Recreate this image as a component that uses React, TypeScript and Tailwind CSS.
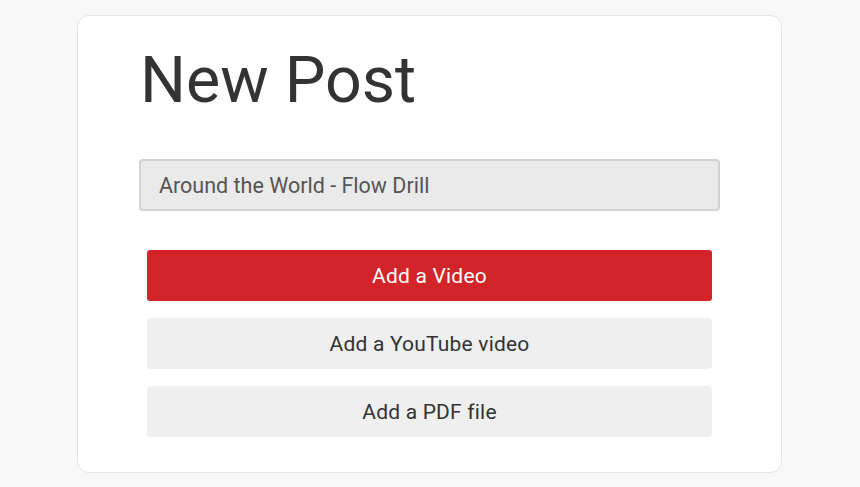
import React from 'react';

const buttons = [
  { label: 'Add a Video', primary: true },
  { label: 'Add a YouTube video', primary: false },
  { label: 'Add a PDF file', primary: false },
];

export default function App() {
  return (
    <div className="min-h-[487px] w-[860px] bg-[#f8f8f8] pt-[15px] pl-[77px] font-['Roboto',sans-serif]">
      <div className="w-[705px] h-[458px] rounded-[12px] border border-[#e3e3e3] bg-white px-[61px] pt-[33px]">
        <h1 className="text-[64.5px] leading-[63px] text-[#333333] font-normal pl-[1px]">New Post</h1>

        <div className="mt-[47px] h-[52px] rounded-[4px] border-2 border-[#d2d2d2] bg-[#ebeaea] flex items-center px-[18px] pt-[2px] text-[21.5px] text-[#555555]">
          Around the World - Flow Drill
        </div>

        <div className="mt-[39px] mx-[8px] flex flex-col gap-[17px]">
          {buttons.map(b => (
            <button
              key={b.label}
              className={
                b.primary
                  ? 'h-[51px] rounded-[3px] bg-[#d3242a] text-white text-[21px] tracking-[0.2px] pt-[3px] flex items-center justify-center'
                  : 'h-[51px] rounded-[4px] bg-[#efefef] text-[#333333] text-[21px] tracking-[0.2px] pt-[3px] flex items-center justify-center'
              }
            >
              {b.label}
            </button>
          ))}
        </div>
      </div>
    </div>
  );
}
